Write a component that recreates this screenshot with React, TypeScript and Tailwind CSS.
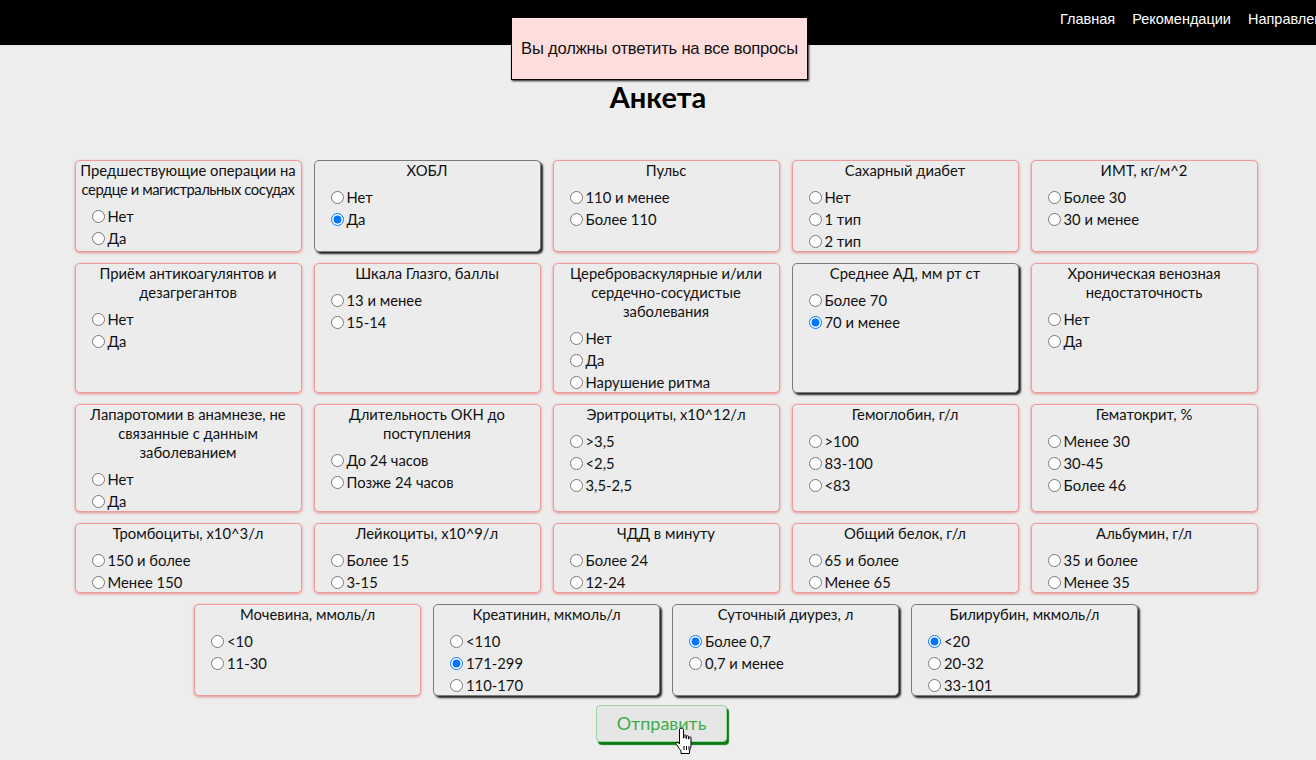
import React from "react";

type Question = { title: string; options: string[]; picked?: number; lines?: string[] };

const questions: Question[] = [
  {
    title: "Предшествующие операции на сердце и магистральных сосудах",
    lines: ["Предшествующие операции на", "сердце и магистральных сосудах"],
    options: ["Нет", "Да"],
  },
  { title: "ХОБЛ", options: ["Нет", "Да"], picked: 1 },
  { title: "Пульс", options: ["110 и менее", "Более 110"] },
  { title: "Сахарный диабет", options: ["Нет", "1 тип", "2 тип"] },
  { title: "ИМТ, кг/м^2", options: ["Более 30", "30 и менее"] },
  { title: "Приём антикоагулянтов и дезагрегантов", options: ["Нет", "Да"] },
  { title: "Шкала Глазго, баллы", options: ["13 и менее", "15-14"] },
  { title: "Цереброваскулярные и/или сердечно-сосудистые заболевания", options: ["Нет", "Да", "Нарушение ритма"] },
  { title: "Среднее АД, мм рт ст", options: ["Более 70", "70 и менее"], picked: 1 },
  { title: "Хроническая венозная недостаточность", options: ["Нет", "Да"] },
  { title: "Лапаротомии в анамнезе, не связанные с данным заболеванием", options: ["Нет", "Да"] },
  { title: "Длительность ОКН до поступления", options: ["До 24 часов", "Позже 24 часов"] },
  { title: "Эритроциты, x10^12/л", options: [">3,5", "<2,5", "3,5-2,5"] },
  { title: "Гемоглобин, г/л", options: [">100", "83-100", "<83"] },
  { title: "Гематокрит, %", options: ["Менее 30", "30-45", "Более 46"] },
  { title: "Тромбоциты, x10^3/л", options: ["150 и более", "Менее 150"] },
  { title: "Лейкоциты, x10^9/л", options: ["Более 15", "3-15"] },
  { title: "ЧДД в минуту", options: ["Более 24", "12-24"] },
  { title: "Общий белок, г/л", options: ["65 и более", "Менее 65"] },
  { title: "Альбумин, г/л", options: ["35 и более", "Менее 35"] },
  { title: "Мочевина, ммоль/л", options: ["<10", "11-30"] },
  { title: "Креатинин, мкмоль/л", options: ["<110", "171-299", "110-170"], picked: 1 },
  { title: "Суточный диурез, л", options: ["Более 0,7", "0,7 и менее"], picked: 0 },
  { title: "Билирубин, мкмоль/л", options: ["<20", "20-32", "33-101"], picked: 0 },
];

const Card = ({ q, idx }: { q: Question; idx: number }) => {
  const done = q.picked !== undefined;
  return (
    <div
      className={
        done
          ? "w-[227px] rounded-[5px] border border-[#7a7a7a] bg-[#ececec] shadow-[2px_2px_2px_rgba(0,0,0,0.85)]"
          : "w-[227px] rounded-[5px] border border-[#ee9a9a] bg-[#ececec] shadow-[0_1px_3px_rgba(220,60,60,0.55)]"
      }
    >
      <div className="text-center text-[14.8px] leading-[19px] text-[#111]">
        {q.lines
          ? q.lines.map((l, i) => (
              <div key={l} className={i === 1 ? "whitespace-nowrap tracking-[-0.45px]" : "whitespace-nowrap"}>
                {l}
              </div>
            ))
          : q.title}
      </div>
      <div className="mt-[7px] flex flex-col gap-[2px] pl-[16px]">
        {q.options.map((o, i) => (
          <label key={o} className="flex h-[20px] items-center text-[14.8px] text-[#111]">
            <input
              type="radio"
              name={"q" + idx}
              defaultChecked={q.picked === i}
              className="m-0 mr-[3px] h-[13px] w-[13px] accent-[#0075ff]"
            />
            {o}
          </label>
        ))}
      </div>
    </div>
  );
};

const Hand = () => (
  <svg width="22" height="28" viewBox="0 0 22 28" className="absolute left-[79px] top-[22px]">
    <path
      d="M6.5 1.5 C7.5 1 8.5 1.5 8.5 2.5 L8.5 11 L9 11 L9 8.5 C9 7.5 11 7.5 11 8.5 L11 11.5 L11.5 11.5 L11.5 9.5 C11.5 8.5 13.5 8.5 13.5 9.5 L13.5 12 L14 12 L14 10.5 C14 9.5 16 9.5 16 10.5 L16 18 C16 21 15 22.5 14.5 24 L14.5 26.5 L6 26.5 L6 24 C5 22.5 3 20 1.5 17.5 C0.5 16 1.5 14.5 3 15.5 L4.5 17 L4.5 2.5 C4.5 1.8 5.5 1.3 6.5 1.5 Z"
      fill="#fff"
      stroke="#000"
      strokeWidth="1"
      strokeLinejoin="round"
    />
    <path d="M9 19 L9 23 M11.5 19 L11.5 23 M14 19 L14 23" stroke="#000" strokeWidth="1" />
  </svg>
);

export default function App() {
  return (
    <div className="min-h-[760px] bg-[#ededed] font-['Lato','Noto_Sans',sans-serif]">
      <header className="relative flex h-[45px] justify-end overflow-hidden bg-black">
        <nav className="flex w-[256px] shrink-0 items-center gap-[17px] overflow-hidden whitespace-nowrap pb-[6px] font-['Liberation_Sans',Arial,sans-serif] text-[14.5px] text-white">
          <span>Главная</span>
          <span>Рекомендации</span>
          <span>Направления</span>
        </nav>
      </header>

      <div className="absolute left-[511px] top-[17px] flex h-[63px] w-[297px] items-center justify-center border border-black bg-[#ffdddd] pt-[2px] font-['Liberation_Sans',Arial,sans-serif] text-[16.6px] tracking-[-0.2px] text-[#111] shadow-[1px_1px_2px_rgba(0,0,0,0.9)]">
        Вы должны ответить на все вопросы
      </div>

      <main className="pt-[35px]">
        <h1 className="text-center text-[29px] font-bold leading-[34px] text-black">Анкета</h1>
        <div className="pl-4">
          <div className="mx-auto mt-[46px] flex w-[1184px] flex-wrap justify-center gap-x-[12px] gap-y-[11px]">
            {questions.map((q, i) => (
              <Card key={q.title} q={q} idx={i} />
            ))}
          </div>
        </div>
        <div className="mt-[9px] flex justify-center">
          <div className="relative ml-[7px]">
            <button className="h-[37px] w-[131px] rounded-[4px] border border-[#9fd3a2] bg-[#e6e6e6] text-[18px] text-[#3fae49] shadow-[2px_3px_1px_#0d7a18]">
              Отправить
            </button>
            <Hand />
          </div>
        </div>
      </main>
    </div>
  );
}
